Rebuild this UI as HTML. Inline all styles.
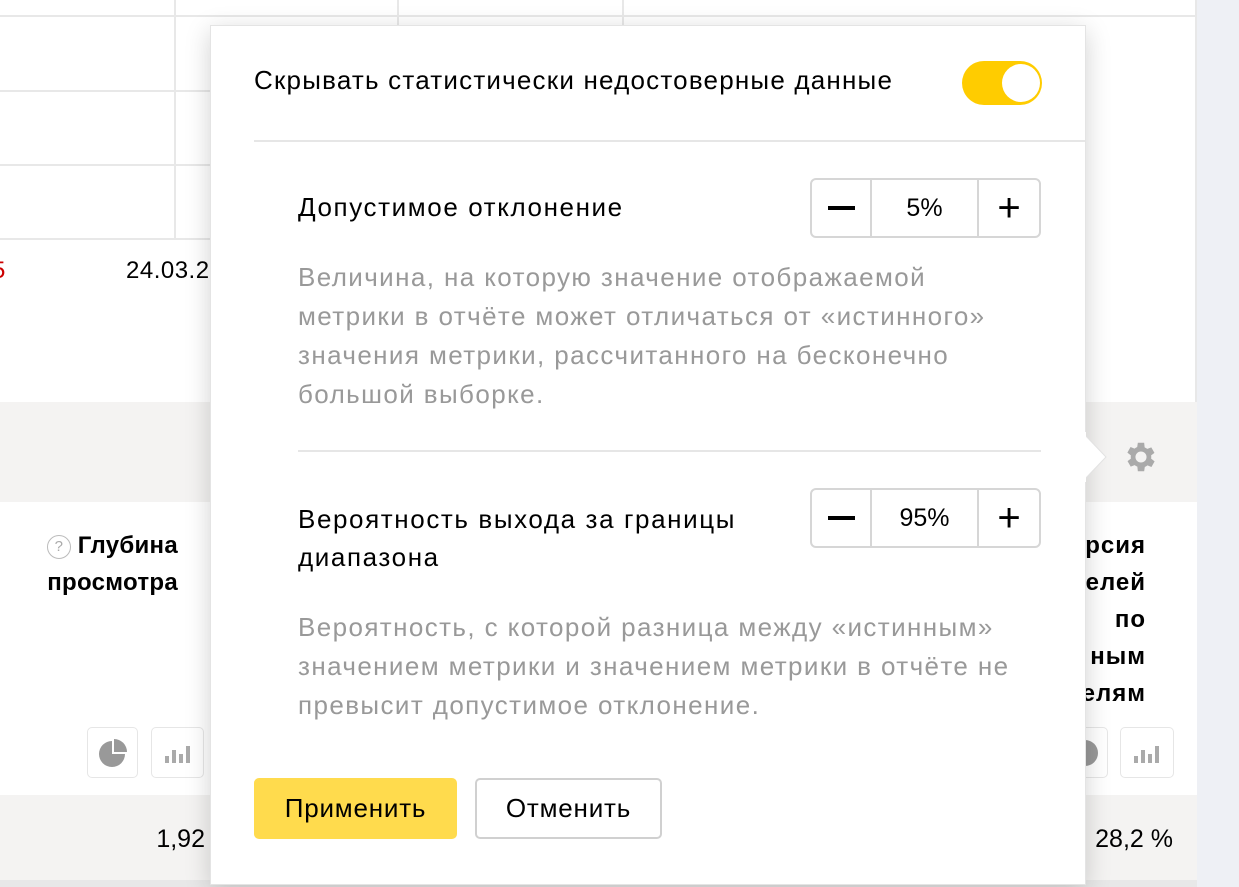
<!DOCTYPE html>
<html><head><meta charset="utf-8"><style>
*{margin:0;padding:0;box-sizing:border-box}
body{width:1239px;height:887px;position:relative;overflow:hidden;background:#fff;font-family:"Liberation Sans",sans-serif;color:#000}
.a{position:absolute}
.hl{position:absolute;height:2px;background:#e8e8e8}
.vl{position:absolute;width:2px;background:#e8e8e8}
.t{position:absolute;white-space:nowrap}
.g{color:#999;font-size:26px;letter-spacing:1.4px}
.box{position:absolute;border:1px solid #e6e6e6;border-radius:5px;background:#fff}
</style></head><body>
<div class="a" style="left:1197px;top:0;width:42px;height:887px;background:#eef0f5"></div>
<div class="hl" style="left:0;top:15px;width:1197px"></div>
<div class="hl" style="left:0;top:90px;width:630px"></div>
<div class="hl" style="left:0;top:164px;width:630px"></div>
<div class="hl" style="left:0;top:238px;width:630px"></div>
<div class="vl" style="left:174px;top:0;height:239px"></div>
<div class="vl" style="left:397px;top:0;height:239px"></div>
<div class="vl" style="left:622px;top:0;height:25px"></div>
<div class="vl" style="left:1195px;top:0;height:402px"></div>
<div class="t" style="left:-8px;top:257px;font-size:24px;color:#c00">5</div>
<div class="t" style="left:126px;top:257px;font-size:24px;letter-spacing:0.5px">24.03.2</div>
<div class="a" style="left:0;top:402px;width:1197px;height:100px;background:#f4f3f2"></div>
<div class="a" style="left:0;top:795px;width:1197px;height:85px;background:#f4f3f2"></div>
<div class="a" style="left:0;top:880px;width:1197px;height:7px;background:#e8e8e8"></div>
<div class="t" style="left:0;width:178px;text-align:right;top:527px;font-size:24px;font-weight:bold;letter-spacing:0.3px;line-height:37px"><span style="display:inline-block;width:24px;height:24px;border:1px solid #bbb;border-radius:50%;font-size:15px;color:#aaa;text-align:center;line-height:22px;font-weight:normal;letter-spacing:0;vertical-align:2px">?</span> Глубина<br>просмотра</div>
<div class="box" style="left:87px;top:727px;width:51px;height:51px"><svg width="51" height="51"><path d="M24 13 A13 13 0 1 0 37 26 L24 26 Z" fill="#999"/><path d="M26 11 A13 13 0 0 1 39 24 L26 24 Z" fill="#999"/></svg></div>
<div class="box" style="left:151px;top:727px;width:53px;height:51px"><svg width="53" height="51"><rect x="13" y="28" width="4" height="7" fill="#aaa"/><rect x="20" y="22" width="4" height="13" fill="#aaa"/><rect x="27" y="26" width="4" height="9" fill="#aaa"/><rect x="34" y="18" width="4" height="17" fill="#aaa"/></svg></div>
<div class="t" style="left:0;width:205px;text-align:right;top:825px;font-size:25px">1,92</div>
<svg class="a" style="left:1122px;top:438px" width="38" height="38" viewBox="0 0 24 24"><path fill="#aaa" d="M19.4 13a7.5 7.5 0 0 0 0-2l2.1-1.6-2-3.5-2.5 1a7 7 0 0 0-1.7-1L15 3h-4l-.4 2.7a7 7 0 0 0-1.7 1l-2.5-1-2 3.5L6.6 11a7.5 7.5 0 0 0 0 2l-2.1 1.6 2 3.5 2.5-1a7 7 0 0 0 1.7 1L11 21h4l.4-2.7a7 7 0 0 0 1.7-1l2.5 1 2-3.5zM13 15.5a3.5 3.5 0 1 1 0-7 3.5 3.5 0 0 1 0 7z" transform="translate(-1 0)"/></svg>
<div class="t" style="left:1000px;width:146px;text-align:right;top:527px;font-size:24px;font-weight:bold;letter-spacing:1px;line-height:37px">рсия<br>елей<br>по<br>ным<br>елям</div>
<div class="box" style="left:1060px;top:727px;width:48px;height:51px"><svg width="48" height="51"><circle cx="24" cy="25" r="13" fill="#999"/></svg></div>
<div class="box" style="left:1120px;top:727px;width:54px;height:51px"><svg width="54" height="51"><rect x="13" y="28" width="4" height="7" fill="#aaa"/><rect x="20" y="22" width="4" height="13" fill="#aaa"/><rect x="27" y="26" width="4" height="9" fill="#aaa"/><rect x="34" y="18" width="4" height="17" fill="#aaa"/></svg></div>
<div class="t" style="top:825px;font-size:25px;left:1000px;width:173px;text-align:right">28,2 %</div>

<div class="a" style="left:210px;top:25px;width:876px;height:860px;background:#fff;border:1px solid #e4e4e4;box-shadow:0 6px 24px rgba(0,0,0,.18)"></div>
<svg class="a" style="left:1084px;top:432px" width="26" height="50"><path d="M0 2 L22 25 L0 48 Z" fill="#fff" stroke="#e2e2e2"/><rect x="0" y="0" width="2" height="50" fill="#fff"/></svg>
<div class="t" style="left:254px;top:65px;font-size:26px;letter-spacing:1.2px">Скрывать статистически недостоверные данные</div>
<div class="a" style="left:962px;top:61px;width:80px;height:44px;border-radius:22px;background:#fc0"></div>
<div class="a" style="left:1002px;top:64px;width:38px;height:38px;border-radius:50%;background:#fff"></div>
<div class="a" style="left:254px;top:140px;width:831px;height:2px;background:#e6e6e6"></div>
<div class="t" style="left:298px;top:192px;font-size:26px;letter-spacing:1.6px">Допустимое отклонение</div>
<div class="a" style="left:810px;top:178px;width:231px;height:60px;border:2px solid #d6d6d6;border-radius:6px;display:flex;font-size:25px;align-items:center;text-align:center">
<div style="width:60px;border-right:2px solid #d6d6d6;height:100%;display:flex;align-items:center;justify-content:center"><div style="width:27px;height:4px;background:#000"></div></div>
<div style="flex:1;line-height:56px;border-right:2px solid #d6d6d6">5%</div>
<div style="width:60px;font-size:40px;line-height:56px">+</div></div>
<div class="t g" style="left:298px;top:258px;line-height:39px">Величина, на которую значение отображаемой<br>метрики в отчёте может отличаться от «истинного»<br>значения метрики, рассчитанного на бесконечно<br>большой выборке.</div>
<div class="a" style="left:298px;top:450px;width:743px;height:2px;background:#e6e6e6"></div>
<div class="t" style="left:298px;top:500px;font-size:26px;letter-spacing:1.6px;line-height:38px">Вероятность выхода за границы<br>диапазона</div>
<div class="a" style="left:810px;top:488px;width:231px;height:60px;border:2px solid #d6d6d6;border-radius:6px;display:flex;font-size:25px;align-items:center;text-align:center">
<div style="width:60px;border-right:2px solid #d6d6d6;height:100%;display:flex;align-items:center;justify-content:center"><div style="width:27px;height:4px;background:#000"></div></div>
<div style="flex:1;line-height:56px;border-right:2px solid #d6d6d6">95%</div>
<div style="width:60px;font-size:40px;line-height:56px">+</div></div>
<div class="t g" style="left:298px;top:608px;line-height:39px">Вероятность, с которой разница между «истинным»<br>значением метрики и значением метрики в отчёте не<br>превысит допустимое отклонение.</div>
<div class="a" style="left:254px;top:778px;width:203px;height:61px;background:#ffdb4d;border-radius:5px;font-size:26px;letter-spacing:0.8px;text-align:center;line-height:61px">Применить</div>
<div class="a" style="left:475px;top:778px;width:187px;height:61px;border:2px solid #d0d0d0;border-radius:5px;font-size:26px;letter-spacing:0.8px;text-align:center;line-height:57px">Отменить</div>
</body></html>
